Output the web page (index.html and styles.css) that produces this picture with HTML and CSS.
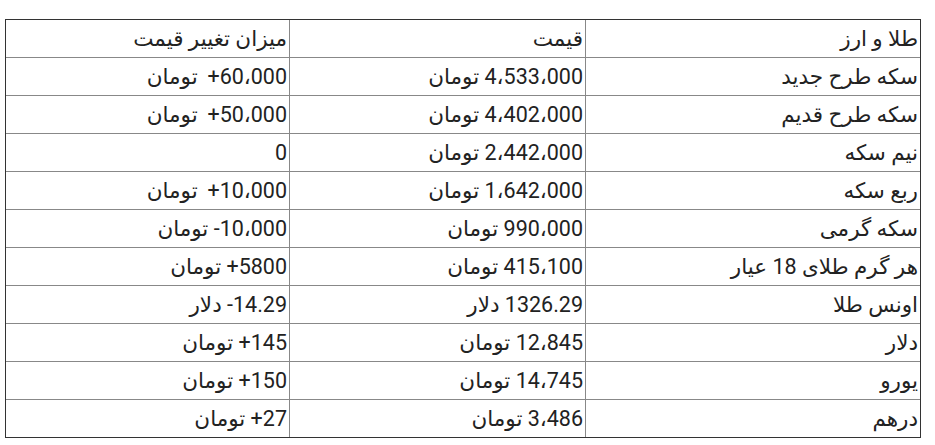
FILE: index.html
```html
<!DOCTYPE html>
<html lang="fa" dir="rtl">
<head>
<meta charset="utf-8">
<link rel="stylesheet" href="styles.css">
</head>
<body>
<table class="prices">
  <colgroup><col class="c1"><col class="c2"><col class="c3"></colgroup>
  <tr><td>طلا و ارز</td><td>قیمت</td><td>میزان تغییر قیمت</td></tr>
  <tr><td>سکه طرح جدید</td><td>4،533،000 تومان</td><td>60،000+&#8201; تومان</td></tr>
  <tr><td>سکه طرح قدیم</td><td>4،402،000 تومان</td><td>50،000+&#8201; تومان</td></tr>
  <tr><td>نیم سکه</td><td>2،442،000 تومان</td><td>0</td></tr>
  <tr><td>ربع سکه</td><td>1،642،000 تومان</td><td>10،000+&#8201; تومان</td></tr>
  <tr><td>سکه گرمی</td><td>990،000 تومان</td><td>10،000- تومان</td></tr>
  <tr><td>هر گرم طلای 18 عیار</td><td>415،100 تومان</td><td>5800+ تومان</td></tr>
  <tr><td>اونس طلا</td><td>1326.29 دلار</td><td>14.29- دلار</td></tr>
  <tr><td>دلار</td><td>12،845 تومان</td><td>145+ تومان</td></tr>
  <tr><td>یورو</td><td>14،745 تومان</td><td>150+ تومان</td></tr>
  <tr><td>درهم</td><td>3،486 تومان</td><td>27+ تومان</td></tr>
</table>
</body>
</html>
```
FILE: styles.css
```css
html, body {
  margin: 0;
  padding: 0;
  background: #ffffff;
}
body {
  direction: rtl;
  font-family: Roboto, "DejaVu Sans", sans-serif;
  color: #222222;
}
.prices {
  margin: 19px 14px 0 0;
  width: 916px;
  border: 1px solid #333333;
  border-collapse: separate;
  border-spacing: 0;
  table-layout: fixed;
  font-size: 21.5px;
}
.c1 { width: 334px; }
.c2 { width: 296px; }
.c3 { width: 284px; }
.prices td {
  height: 37px;
  padding: 0 2px 0 0;
  text-align: right;
  vertical-align: middle;
  white-space: nowrap;
  line-height: 37px;
}
.prices tr + tr td {
  border-top: 1px solid #888888;
}
.prices td + td {
  border-right: 1px solid #888888;
}
```
